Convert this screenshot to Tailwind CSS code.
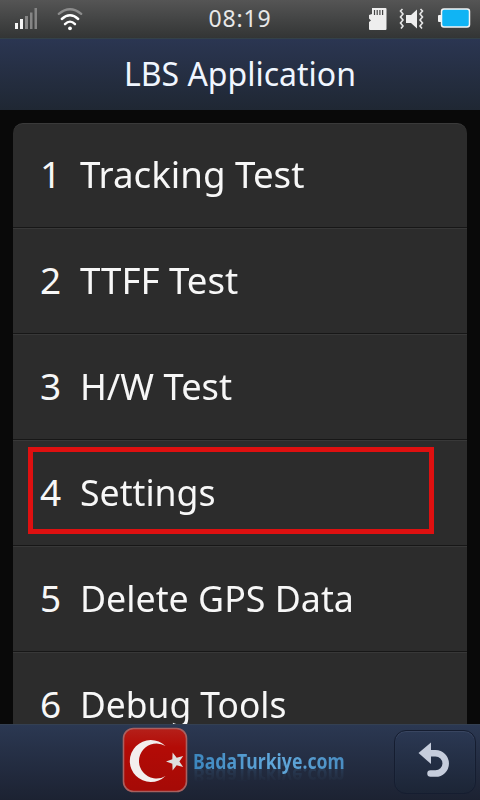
<!DOCTYPE html>
<html lang="en">
<head>
    <meta charset="UTF-8">
    <meta name="viewport" content="width=device-width, initial-scale=1.0">
    <title>LBS Application</title>
    <script src="https://cdn.jsdelivr.net/npm/@tailwindcss/browser@4"></script>
</head>
<body class="bg-[#090909] font-['Noto_Sans',sans-serif] text-[#f7f7f7]">
    <div class="w-[480px] h-[800px] flex flex-col overflow-hidden">

        <!-- Status bar -->
        <div class="h-[38px] shrink-0 grid grid-cols-3 items-start bg-linear-to-b from-[#555555] to-[#333535]">
            <svg class="w-[160px] h-[38px]" viewBox="0 0 160 38">
                <g fill="#f5f5f5">
                    <rect x="15" y="23" width="3" height="6"/>
                    <rect x="20" y="19" width="3" height="10"/>
                </g>
                <g fill="#858585">
                    <rect x="25" y="16" width="3" height="13"/>
                    <rect x="30" y="12.500" width="2.500" height="16.500"/>
                    <rect x="34.500" y="8" width="2.500" height="21"/>
                </g>
                <g fill="none" stroke="#ffffff" stroke-width="2.400" stroke-linecap="round">
                    <path stroke="#8c8c8c" d="M58.800 13.800Q70 4.500 81.200 13.800"/>
                    <path d="M61.800 19Q70 11.500 78.200 19"/>
                    <path d="M65 24.200Q70 19 75 24.200"/>
                </g>
                <circle cx="70" cy="28.300" r="1.900" fill="#ffffff"/>
            </svg>
            <span class="text-[23px] leading-[36px] tracking-[0.8px] text-[#e8e8e8] text-center">08:19</span>
            <svg class="w-[160px] h-[38px]" viewBox="320 0 160 38">
                <path fill="#eeeeee" d="M372 8h13.500q1 0 1 1v20q0 1-1 1h-15.500q-1 0-1-1v-7l2-1.500-2-2V15l3-1z"/>
                <path stroke="#444444" stroke-width="1.200" d="M374.500 10v5M377.200 10v5M379.900 10v5M382.600 10v5"/>
                <path fill="#eeeeee" d="M406 15h5l6-5.500v19L411 23h-5z"/>
                <g fill="none" stroke="#e6e6e6" stroke-width="1.600">
                    <path d="M402.500 9l-2 2 2.500 3-2.500 3 2.500 3-2.500 3 2.500 3-2 2.500"/>
                    <path d="M420.500 9l2 2-2.500 3 2.500 3-2.500 3 2.500 3-2.500 3 2 2.500"/>
                </g>
                <rect x="438" y="15" width="4" height="7" rx="1" fill="#f4f4f4"/>
                <rect x="441.500" y="9" width="28" height="18" rx="2.500" fill="#10b4f4" stroke="#f4f4f4" stroke-width="1.500"/>
            </svg>
        </div>

        <!-- Title bar -->
        <header class="h-[72px] shrink-0 flex justify-center bg-linear-to-b from-[#2b3652] to-[#1f2733] border-t border-[#344149]">
            <h1 class="text-[32px] leading-[70px] text-[#f0f6ff] whitespace-nowrap">LBS Application</h1>
        </header>

        <!-- Menu -->
        <main class="flex-1 min-h-0 overflow-hidden pt-[13px] px-[13px]">
            <ul class="w-[454px] rounded-t-[10px] bg-[#2c2c2c] text-[37px] leading-[101px] whitespace-nowrap border-t border-[#3a3a3a]">
                <li class="h-[104px] flex pl-[27px] border-b border-[#171717] leading-[99px]">
                    <span class="w-[40px]">1</span><span class="origin-left scale-x-[0.992]">Tracking Test</span>
                </li>
                <li class="h-[106px] flex pl-[27px] border-t border-t-[#383838] border-b border-b-[#171717]">
                    <span class="w-[40px]">2</span><span class="origin-left scale-x-[0.99]">TTFF Test</span>
                </li>
                <li class="h-[106px] flex pl-[27px] border-t border-t-[#383838] border-b border-b-[#171717]">
                    <span class="w-[40px]">3</span><span class="origin-left scale-x-[0.98]">H/W Test</span>
                </li>
                <li class="relative h-[106px] flex pl-[27px] border-t border-t-[#383838] border-b border-b-[#171717]">
                    <span class="w-[40px]">4</span><span class="origin-left scale-x-[0.963]">Settings</span>
                    <!-- Highlight frame -->
                    <div class="absolute left-[15px] top-[6px] w-[406px] h-[87px] border-5 border-[#de1010]"></div>
                </li>
                <li class="h-[106px] flex pl-[27px] border-t border-t-[#383838] border-b border-b-[#171717]">
                    <span class="w-[40px]">5</span><span class="origin-left scale-x-[0.967]">Delete GPS Data</span>
                </li>
                <li class="h-[106px] flex pl-[27px] border-t border-[#383838]">
                    <span class="w-[40px]">6</span><span class="origin-left scale-x-[0.956]">Debug Tools</span>
                </li>
            </ul>
        </main>

        <!-- Bottom bar -->
        <footer class="h-[76px] shrink-0 flex items-start bg-linear-to-b from-[#2b3852] to-[#1c2232] border-t border-[#344052] pl-[122px]">
            <svg class="w-[66px] h-[68px] mt-[2px] shrink-0" viewBox="122 727 66 68">
                <defs>
                    <linearGradient id="flag" x1="0" y1="0" x2="0" y2="1">
                        <stop offset="0" stop-color="#b5201a"/>
                        <stop offset="0.300" stop-color="#b30b06"/>
                        <stop offset="1" stop-color="#a50a06"/>
                    </linearGradient>
                </defs>
                <rect x="123.500" y="728.500" width="63" height="63" rx="10" fill="url(#flag)" stroke="#a9605f" stroke-width="1.600"/>
                <path fill="#f3efee" d="M165.500 746A21 21 0 1 0 165.500 776A17.500 17.500 0 1 1 165.500 746z"/>
                <path fill="#dedede" d="M166 761.500L172.300 759.200 172.600 752.500 176.700 757.800 183.200 755.900 179.400 761.500 183.200 767.100 176.700 765.200 172.600 770.500 172.300 763.800z"/>
            </svg>
            <div class="ml-[5px] mt-[20px] flex flex-col text-[21px] leading-[32px] font-bold whitespace-nowrap w-[201px]">
                <span class="origin-left scale-x-[0.84] bg-linear-to-r from-[#3c86bd] via-[#62a9dc] to-[#4386bb] bg-clip-text text-transparent">BadaTurkiye.com</span>
                <span class="origin-left scale-x-[0.84] -scale-y-100 -mt-[17px] h-[32px] text-[#5599cc]/25 mask-t-from-0% mask-t-to-70%" aria-hidden="true">BadaTurkiye.com</span>
            </div>
            <button class="w-[82px] h-[64px] mt-[5px] shrink-0 rounded-[12px] border border-[#151d30] bg-linear-to-b from-[#2b3853] to-[#1c2536] shadow-[inset_0_1px_1px_#3b4862] flex items-center justify-center" aria-label="Back">
                <svg class="w-[80px] h-[62px]" viewBox="395 731 80 62">
                    <path fill="#c6cddc" d="M418.500 753L431 742.500v21.500z"/>
                    <path fill="none" stroke="#c6cddc" stroke-width="6.500" d="M430 753.200H435.500A10.200 10.200 0 0 1 435.500 773.600H430.500" stroke-linecap="round"/>
                </svg>
            </button>
        </footer>
    </div>
</body>
</html>
